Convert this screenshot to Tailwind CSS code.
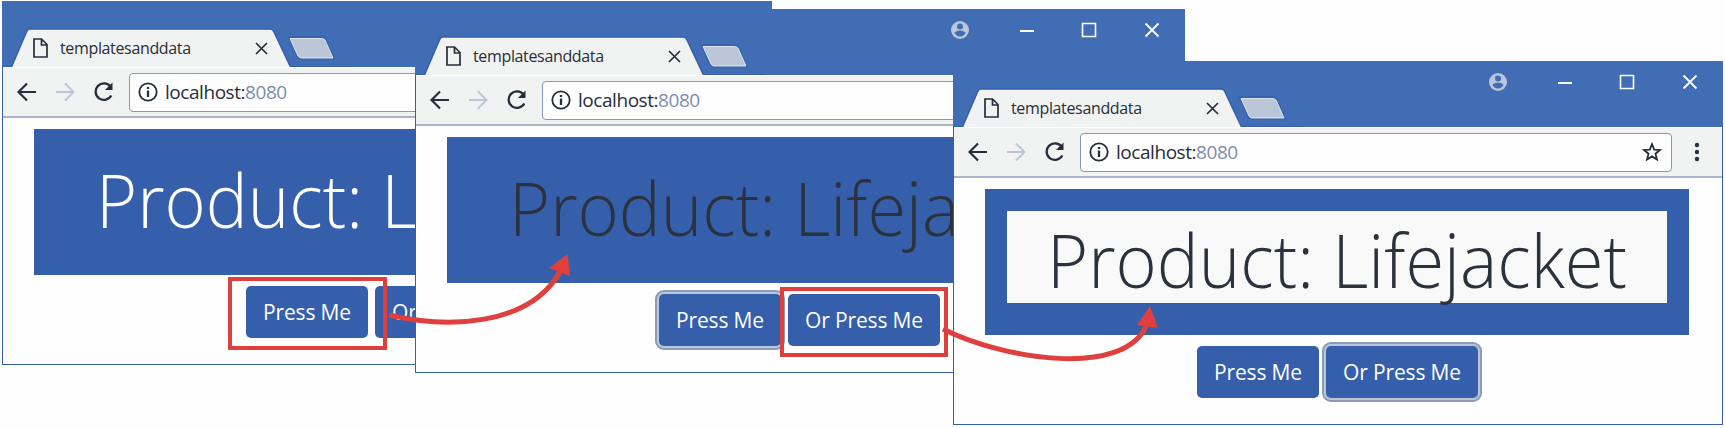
<!DOCTYPE html>
<html lang="en">
<head>
<meta charset="utf-8">
<title>templatesanddata</title>
<script src="https://cdn.jsdelivr.net/npm/@tailwindcss/browser@4"></script>
</head>
<body class="bg-[#fefefe]">
<main id="desktop" class="relative w-[1725px] h-[428px] overflow-hidden font-['Open_Sans',sans-serif] text-[#272e3b]"></main>

<script>
const browserWindow = ({ place, heading, first, second, name }) => `
<section aria-label="${name}" class="absolute ${place} w-[770px] h-[364px] flex flex-col bg-[#fefefe] border border-[#355fab]">
  <header class="relative -mt-px -mx-px h-[66px] shrink-0 flex justify-between bg-[#416db4]">
    <svg class="absolute left-0 top-0" width="350" height="66" fill="none">
      <path d="M0 65.500 H10 M289 65.500 H350" stroke="#355fab"/>
      <path d="M9 67 L24.500 31 Q25.500 28 28 28 H268 Q271 28 272 31 L289 67" fill="#f1f2f2" stroke="#355fab" stroke-width="1.500"/>
      <path d="M288 37 H319 Q322 37 323 39 L331 57 H299 Q297 57 296 55 Z" fill="#bcc6d9" stroke="#355fab" stroke-width="3"/>
      <path d="M288 37.500 H319 Q322 37.500 323 39 L331 57 H299 Q297 57 296 55 Z" fill="#bcc6d9" stroke="#dfe4ee"/>
    </svg>
    <div class="relative flex items-center h-[38px] mt-[28px] ml-[31px] w-[235px]">
      <svg width="15" height="20" fill="none" stroke="#272e3b" stroke-width="1.700"><path d="M1 1 H8.500 L14 6.500 V19 H1 Z M8.500 1 V7 H14"/></svg>
      <span class="ml-[12px] -mt-px text-[16px] leading-5 tracking-[-0.35px]">templatesanddata</span>
      <svg class="ml-auto" width="13" height="13" stroke="#272e3b" stroke-width="1.700"><path d="M1 1 L12 12 M12 1 L1 12"/></svg>
    </div>
    <div class="flex items-center h-[20px] mt-[11px] mr-[25px]">
      <svg width="20" height="20"><circle cx="10" cy="10" r="9" fill="#bcc6d9"/><circle cx="10" cy="6.500" r="3" fill="#416db4"/><path d="M4.500 12.500 Q10 8.500 15.500 12.500 Q14 16.500 10 16.500 Q6 16.500 4.500 12.500" fill="#416db4"/></svg>
      <svg class="ml-[49px]" width="16" height="16" stroke="#fefefe" stroke-width="2"><path d="M1 9 H15"/></svg>
      <svg class="ml-[46px]" width="16" height="16" fill="none" stroke="#fefefe" stroke-width="1.600"><path d="M1.500 1.500 H14.500 V14.500 H1.500 Z"/></svg>
      <svg class="ml-[47px]" width="16" height="16" stroke="#fefefe" stroke-width="1.800"><path d="M1.500 1.500 L14.500 14.500 M14.500 1.500 L1.500 14.500"/></svg>
    </div>
  </header>
  <div class="h-[51px] shrink-0 flex items-center bg-[#f1f2f2] border-t border-b-2 border-t-[#fefefe] border-b-[#a9b5ca] pl-[14px]">
    <svg width="20" height="20" fill="none" stroke="#272e3b" stroke-width="2.200"><path d="M19 10 H1.500 M10 1.500 L1.500 10 L10 18.500"/></svg>
    <svg class="ml-[18px]" width="20" height="20" fill="none" stroke="#bcc6d9" stroke-width="2"><path d="M1 10 H18 M10 1.500 L18.500 10 L10 18.500"/></svg>
    <svg class="ml-[18px]" width="22" height="20" fill="none" stroke="#272e3b" stroke-width="2.300"><path d="M17.500 4.500 A8.300 8.300 0 1 0 18.300 13.500"/><path d="M12 8 H19.500 V0.500 Z" fill="#272e3b" stroke="none"/></svg>
    <div class="ml-[14px] w-[592px] h-[39px] flex items-center bg-[#fefefe] border-[1.5px] border-[#8796b2] rounded-[4px] pl-[8px] pr-[9px]">
      <svg width="20" height="20" fill="none" stroke="#272e3b" stroke-width="1.800"><circle cx="10" cy="10" r="8.700"/><path d="M10 8.500 V15 M10 5 V7" stroke-width="2.300"/></svg>
      <span class="ml-[7px] text-[19px] leading-6 tracking-[-0.45px]">localhost:<span class="text-[#7d8dac]">8080</span></span>
      <svg class="ml-auto" width="20" height="20" fill="none" stroke="#272e3b" stroke-width="1.800"><path d="M10 2.200 L12.200 7.600 L18 8 L13.500 11.700 L15 17.500 L10 14.400 L5 17.500 L6.500 11.700 L2 8 L7.800 7.600 Z"/></svg>
    </div>
    <svg class="ml-[22px]" width="6" height="20" fill="#272e3b"><circle cx="3" cy="3" r="2.200"/><circle cx="3" cy="10" r="2.200"/><circle cx="3" cy="17" r="2.200"/></svg>
  </div>
  <div class="mt-[11px] ml-[31px] w-[704px] h-[146px] shrink-0 bg-[#355fab] px-[22px] pt-[22px]">
    <h1 class="h-[92px] pl-[40px] ${heading}"><span class="inline-block origin-left scale-x-[0.951] whitespace-nowrap text-[74px] leading-[98px] font-light">Product: Lifejacket</span></h1>
  </div>
  <div class="mt-[11px] ml-[243px] flex gap-[7px] text-[21px] leading-[52px] text-[#fefefe]">
    <button class="w-[122px] h-[52px] rounded-[5px] bg-[#355fab] tracking-[-0.15px] ${first}">Press Me</button>
    <button class="w-[152px] h-[52px] rounded-[5px] bg-[#355fab] tracking-[-0.15px] ${second}">Or Press Me</button>
  </div>
</section>`;

const focusRing = 'shadow-[0_0_0_2px_#bcc6d9,0_0_0_4px_#8b9ab5]';

document.getElementById('desktop').innerHTML = [
  { name: 'Initial state', place: 'left-[2px] top-[1px]', heading: 'text-[#fefefe]', first: '', second: '' },
  { name: 'After first press', place: 'left-[415px] top-[9px]', heading: 'text-[#2c323d]', first: focusRing, second: '' },
  { name: 'After second press', place: 'left-[953px] top-[61px]', heading: 'text-[#2c323d] bg-[#f9f9f9]', first: '', second: focusRing },
].map(browserWindow).join('') + `
<div class="absolute left-[228px] top-[277px] w-[159px] h-[73px] border-4 border-[#df403d]"></div>
<div class="absolute left-[780px] top-[287px] w-[168px] h-[70px] border-4 border-[#df403d]"></div>
<svg class="absolute left-0 top-0" width="1725" height="428" fill="none" stroke="#df403d" stroke-width="5">
  <path d="M389 315 C445 328 530 328 561 270"/>
  <path d="M567.500 254 L549 268 L570 276 Z" fill="#df403d" stroke="none"/>
  <path d="M943 329 C1000 358 1125 380 1147 324"/>
  <path d="M1150 306 L1137 325 L1158 328 Z" fill="#df403d" stroke="none"/>
</svg>`;
</script>
</body>
</html>
